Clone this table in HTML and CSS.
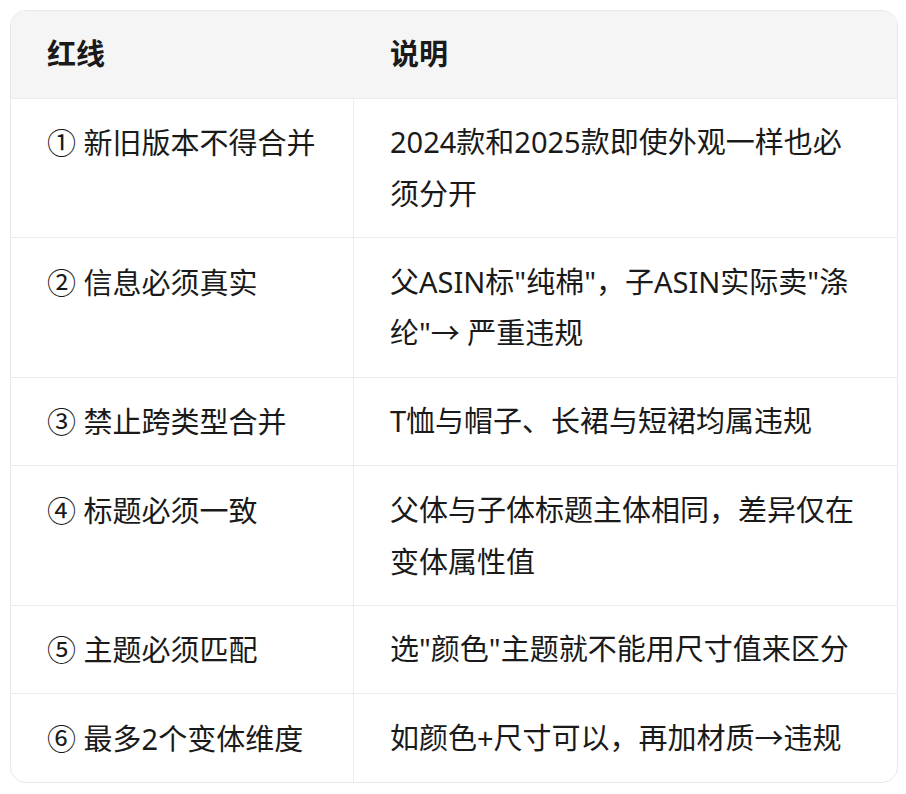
FILE: index.html
```html
<!DOCTYPE html>
<html lang="zh-CN">
<head>
<meta charset="utf-8">
<link rel="stylesheet" href="styles.css">
</head>
<body>
<div class="wrap">
<table class="rules">
<thead>
<tr><th class="c1">红线</th><th class="c2">说明</th></tr>
</thead>
<tbody>
<tr><td class="c1"><span class="num">①</span> 新旧版本不得合并</td><td class="c2">2024款和2025款即使外观一样也必须分开</td></tr>
<tr><td class="c1"><span class="num">②</span> 信息必须真实</td><td class="c2">父ASIN标"纯棉"，子ASIN实际卖"涤纶"→ 严重违规</td></tr>
<tr><td class="c1"><span class="num">③</span> 禁止跨类型合并</td><td class="c2">T恤与帽子、长裙与短裙均属违规</td></tr>
<tr><td class="c1"><span class="num">④</span> 标题必须一致</td><td class="c2">父体与子体标题主体相同，差异仅在变体属性值</td></tr>
<tr><td class="c1"><span class="num">⑤</span> 主题必须匹配</td><td class="c2">选"颜色"主题就不能用尺寸值来区分</td></tr>
<tr><td class="c1"><span class="num">⑥</span> 最多2个变体维度</td><td class="c2">如颜色+尺寸可以，再加材质→违规</td></tr>
</tbody>
</table>
</div>
</body>
</html>
```

FILE: styles.css
```css
html, body {
  margin: 0;
  padding: 0;
  background: #ffffff;
}
.wrap {
  padding: 10px 8px 10px 10px;
}
.rules {
  width: 888px;
  border-collapse: separate;
  border-spacing: 0;
  border: 1px solid #e8e8e8;
  border-radius: 16px;
  overflow: hidden;
  font-family: "Noto Sans", "Noto Sans CJK SC", sans-serif;
  font-size: 29px;
  line-height: 51.8px;
  color: #1a1a1a;
}
.rules th, .rules td {
  text-align: left;
  vertical-align: top;
  padding: 17.45px 36px 17.45px 36px;
  border-bottom: 1px solid #ececec;
}
.rules tbody tr:last-child td {
  border-bottom: none;
}
.rules th {
  background: #f5f5f5;
  font-weight: 700;
}
.rules .c1 {
  width: 270px;
  border-right: 1px solid #ececec;
}
.rules th.c1 {
  border-right: none;
}
.num {
  font-family: "Noto Sans CJK SC", sans-serif;
}
```
